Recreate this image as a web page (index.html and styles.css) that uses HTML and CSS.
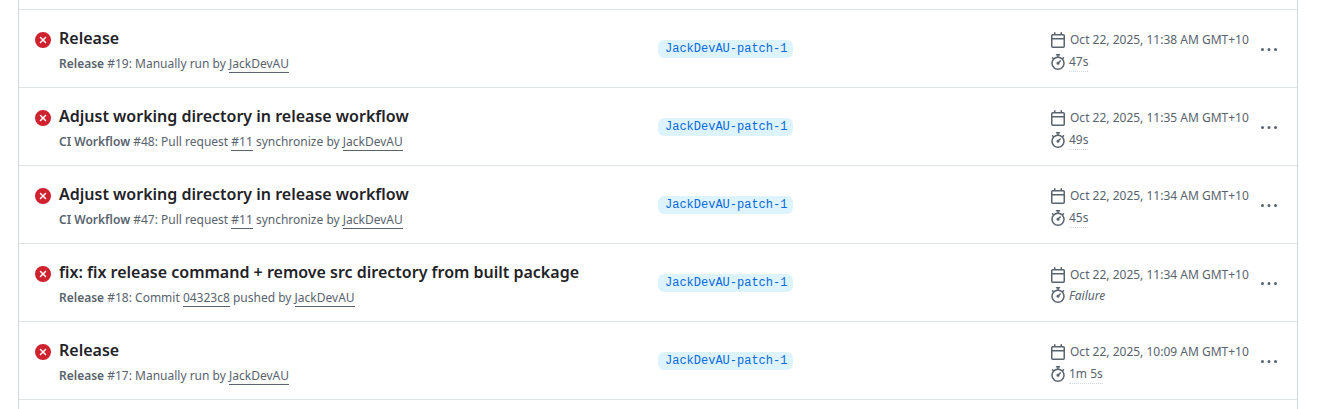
FILE: index.html
```html
<!DOCTYPE html>
<html lang="en">
<head>
    <meta charset="UTF-8">
    <title>Actions runs</title>
    <link rel="stylesheet" href="styles.css">
</head>
<body>
    <svg class="sprite" xmlns="http://www.w3.org/2000/svg">
        <symbol id="x-circle" viewBox="0 0 16 16"><path d="M2.343 13.657A8 8 0 1 1 13.658 2.343 8 8 0 0 1 2.343 13.657ZM6.03 4.97a.751.751 0 0 0-1.042.018.751.751 0 0 0-.018 1.042L6.94 8 4.97 9.97a.749.749 0 0 0 .326 1.275.749.749 0 0 0 .734-.215L8 9.06l1.97 1.97a.749.749 0 0 0 1.275-.326.749.749 0 0 0-.215-.734L9.06 8l1.97-1.97a.749.749 0 0 0-.326-1.275.749.749 0 0 0-.734.215L8 6.94Z"/></symbol>
        <symbol id="calendar" viewBox="0 0 16 16"><path d="M4.75 0a.75.75 0 0 1 .75.75V2h5V.75a.75.75 0 0 1 1.5 0V2h1.25c.966 0 1.75.784 1.75 1.75v10.5A1.75 1.75 0 0 1 13.25 16H2.75A1.75 1.75 0 0 1 1 14.25V3.75C1 2.784 1.784 2 2.75 2H4V.75A.75.75 0 0 1 4.75 0ZM2.5 7.5v6.75c0 .138.112.25.25.25h10.5a.25.25 0 0 0 .25-.25V7.5Zm10.75-4H2.75a.25.25 0 0 0-.25.25V6h11V3.75a.25.25 0 0 0-.25-.25Z"/></symbol>
        <symbol id="stopwatch" viewBox="0 0 16 16"><path d="M5.75.75A.75.75 0 0 1 6.5 0h3a.75.75 0 0 1 0 1.5h-.75v1l-.001.041a6.724 6.724 0 0 1 3.464 1.435l.007-.006.75-.75a.75.75 0 1 1 1.06 1.06l-.75.75-.006.007a6.75 6.75 0 1 1-10.548 0L2.72 5.03l-.75-.75a.75.75 0 0 1 1.06-1.06l.75.75.007.006A6.72 6.72 0 0 1 7.25 2.541V1.5H6.5a.75.75 0 0 1-.75-.75ZM8 14.5a5.25 5.25 0 1 0-.001-10.501A5.25 5.25 0 0 0 8 14.5Zm.389-6.7 1.33-1.33a.75.75 0 1 1 1.061 1.06L9.45 8.861A1.503 1.503 0 0 1 8 10.75a1.499 1.499 0 1 1 .389-2.95Z"/></symbol>
        <symbol id="kebab" viewBox="0 0 16 16"><path d="M8 9a1.5 1.5 0 1 0 0-3 1.5 1.5 0 0 0 0 3ZM1.5 9a1.5 1.5 0 1 0 0-3 1.5 1.5 0 0 0 0 3Zm13 0a1.5 1.5 0 1 0 0-3 1.5 1.5 0 0 0 0 3Z"/></symbol>
    </svg>

    <div class="run-list">
        <div class="run-stub"></div>

        <div class="run-row">
            <svg class="status-icon"><use href="#x-circle"/></svg>
            <div class="run-info">
                <a class="run-title">Release</a>
                <div class="run-meta"><b>Release</b> #19: Manually run by <a>JackDevAU</a></div>
            </div>
            <div class="run-branch"><span class="branch-tag">JackDevAU-patch-1</span></div>
            <div class="run-time">
                <div class="time-line"><svg class="time-icon"><use href="#calendar"/></svg><span class="time-date">Oct 22, 2025, 11:38 AM GMT+10</span></div>
                <div class="time-line"><svg class="time-icon"><use href="#stopwatch"/></svg><span class="time-took">47s</span></div>
            </div>
            <svg class="kebab-icon"><use href="#kebab"/></svg>
        </div>

        <div class="run-row">
            <svg class="status-icon"><use href="#x-circle"/></svg>
            <div class="run-info">
                <a class="run-title">Adjust working directory in release workflow</a>
                <div class="run-meta"><b>CI Workflow</b> #48: Pull request <a>#11</a> synchronize by <a>JackDevAU</a></div>
            </div>
            <div class="run-branch"><span class="branch-tag">JackDevAU-patch-1</span></div>
            <div class="run-time">
                <div class="time-line"><svg class="time-icon"><use href="#calendar"/></svg><span class="time-date">Oct 22, 2025, 11:35 AM GMT+10</span></div>
                <div class="time-line"><svg class="time-icon"><use href="#stopwatch"/></svg><span class="time-took">49s</span></div>
            </div>
            <svg class="kebab-icon"><use href="#kebab"/></svg>
        </div>

        <div class="run-row">
            <svg class="status-icon"><use href="#x-circle"/></svg>
            <div class="run-info">
                <a class="run-title">Adjust working directory in release workflow</a>
                <div class="run-meta"><b>CI Workflow</b> #47: Pull request <a>#11</a> synchronize by <a>JackDevAU</a></div>
            </div>
            <div class="run-branch"><span class="branch-tag">JackDevAU-patch-1</span></div>
            <div class="run-time">
                <div class="time-line"><svg class="time-icon"><use href="#calendar"/></svg><span class="time-date">Oct 22, 2025, 11:34 AM GMT+10</span></div>
                <div class="time-line"><svg class="time-icon"><use href="#stopwatch"/></svg><span class="time-took">45s</span></div>
            </div>
            <svg class="kebab-icon"><use href="#kebab"/></svg>
        </div>

        <div class="run-row">
            <svg class="status-icon"><use href="#x-circle"/></svg>
            <div class="run-info">
                <a class="run-title">fix: fix release command + remove src directory from built package</a>
                <div class="run-meta"><b>Release</b> #18: Commit <a>04323c8</a> pushed by <a>JackDevAU</a></div>
            </div>
            <div class="run-branch"><span class="branch-tag">JackDevAU-patch-1</span></div>
            <div class="run-time">
                <div class="time-line"><svg class="time-icon"><use href="#calendar"/></svg><span class="time-date">Oct 22, 2025, 11:34 AM GMT+10</span></div>
                <div class="time-line time-line-failed"><svg class="time-icon"><use href="#stopwatch"/></svg><span class="time-failed">Failure</span></div>
            </div>
            <svg class="kebab-icon"><use href="#kebab"/></svg>
        </div>

        <div class="run-row">
            <svg class="status-icon"><use href="#x-circle"/></svg>
            <div class="run-info">
                <a class="run-title">Release</a>
                <div class="run-meta"><b>Release</b> #17: Manually run by <a>JackDevAU</a></div>
            </div>
            <div class="run-branch"><span class="branch-tag">JackDevAU-patch-1</span></div>
            <div class="run-time">
                <div class="time-line"><svg class="time-icon"><use href="#calendar"/></svg><span class="time-date">Oct 22, 2025, 10:09 AM GMT+10</span></div>
                <div class="time-line"><svg class="time-icon"><use href="#stopwatch"/></svg><span class="time-took">1m 5s</span></div>
            </div>
            <svg class="kebab-icon"><use href="#kebab"/></svg>
        </div>

        <div class="run-stub run-stub-last"></div>
    </div>
</body>
</html>
```
FILE: styles.css
```css
html, body {
    height: 409px;
    overflow: hidden;
}

body {
    margin: 0;
    font-family: "Noto Sans", sans-serif;
    font-size: 12px;
    color: #59636e;
    background-color: #fff;
}

.sprite {
    display: none;
}

/* list frame, cut off at top and bottom by the viewport */
.run-list {
    width: 1280px;
    margin-left: 18px;
    box-sizing: border-box;
    border-left: 1px solid #d1d9e0;
    border-right: 1px solid #d1d9e0;
}

.run-stub {
    height: 9px;
}

.run-stub-last {
    height: 10px;
    box-sizing: border-box;
    border-top: 1px solid #dfe4e9;
}

.run-row {
    display: flex;
    align-items: center;
    height: 78px;
    box-sizing: border-box;
    padding-left: 16px;
    border-top: 1px solid #dfe4e9;
}

.status-icon {
    flex: 0 0 auto;
    width: 16px;
    height: 16px;
    margin-top: -17px;
    margin-right: 8px;
    fill: #cf222e;
}

/* left column */
.run-info {
    flex: 0 0 599px;
    margin-top: 1px;
}

.run-title {
    display: block;
    font-size: 16px;
    line-height: 24px;
    font-weight: 600;
    color: #1f2328;
}

.run-meta {
    margin-top: 5px;
    line-height: 18px;
}

.run-meta b {
    font-weight: 600;
}

.run-meta a {
    border-bottom: 1px solid #59636e;
}

/* branch column */
.run-branch {
    flex: 0 0 392px;
    margin-top: -1px;
}

.branch-tag {
    display: inline-block;
    padding: 0 6px 0 7px;
    font-family: "Liberation Mono", monospace;
    font-size: 12px;
    line-height: 18px;
    color: #0969da;
    background-color: #ddf4ff;
    border-radius: 6px;
}

/* time column */
.run-time {
    flex: 0 0 210px;
    margin-top: 5px;
}

.time-line {
    display: flex;
    align-items: center;
    height: 22px;
}

/* no dotted underline here, so the line sits a little tighter */
.time-line-failed {
    height: 18px;
    margin-bottom: 2px;
}

.time-icon {
    flex: 0 0 auto;
    width: 16px;
    height: 16px;
    fill: #59636e;
}

.time-date {
    margin-left: 4px;
    margin-bottom: 1px;
}

.time-took {
    margin-left: 3px;
    padding-bottom: 1px;
    border-bottom: 1px dotted #d1d9e0;
}

.time-failed {
    margin-left: 3px;
    font-style: italic;
}

.kebab-icon {
    flex: 0 0 auto;
    width: 16px;
    height: 16px;
    margin-top: 2px;
    margin-left: 1px;
    fill: #59636e;
}
```
